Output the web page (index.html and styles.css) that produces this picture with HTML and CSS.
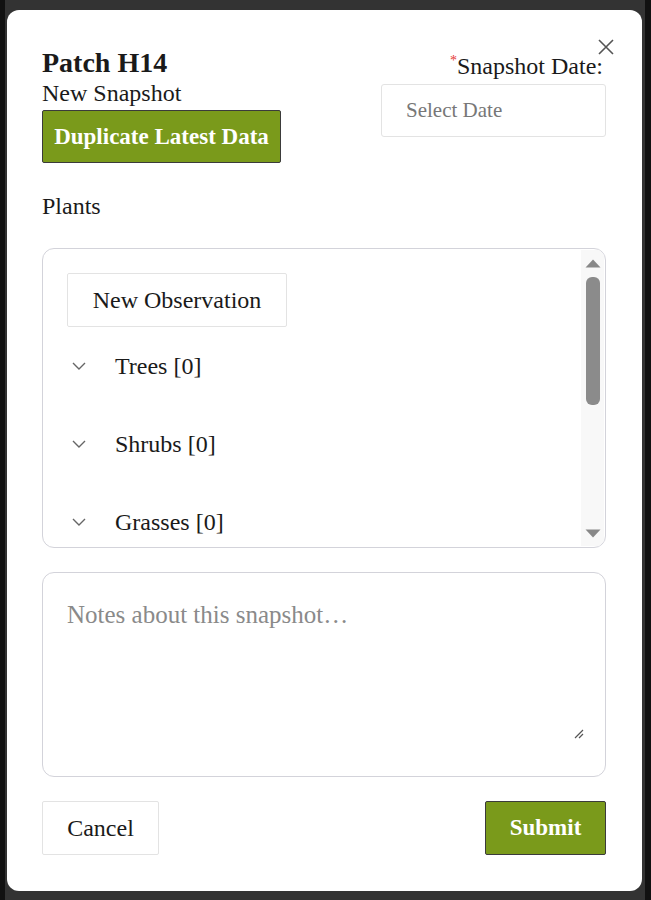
FILE: index.html
```html
<!DOCTYPE html>
<html>
<head>
<meta charset="utf-8">
<link rel="stylesheet" href="styles.css">
</head>
<body>
<div class="backdrop">
  <div class="modal">
    <button class="close" aria-label="Close">
      <svg width="16" height="16" viewBox="0 0 16 16"><path d="M1 1 L15 15 M15 1 L1 15" stroke="#555" stroke-width="1.6" fill="none"/></svg>
    </button>
    <div class="header">
      <div class="head-left">
        <h1 class="title">Patch H14</h1>
        <div class="subtitle">New Snapshot</div>
        <button class="btn btn-primary btn-dup">Duplicate Latest Data</button>
      </div>
      <div class="head-right">
        <label class="date-label"><span class="req">*</span>Snapshot Date:</label>
        <div class="date-input">Select Date</div>
      </div>
    </div>
    <div class="section-title">Plants</div>
    <div class="plants">
      <div class="plants-list">
        <button class="btn btn-default btn-obs">New Observation</button>
        <div class="row"><svg class="chev" width="14" height="8" viewBox="0 0 14 8"><path d="M1 1 L7 7 L13 1" stroke="#666" stroke-width="1.4" fill="none"/></svg><span>Trees [0]</span></div>
        <div class="row"><svg class="chev" width="14" height="8" viewBox="0 0 14 8"><path d="M1 1 L7 7 L13 1" stroke="#666" stroke-width="1.4" fill="none"/></svg><span>Shrubs [0]</span></div>
        <div class="row"><svg class="chev" width="14" height="8" viewBox="0 0 14 8"><path d="M1 1 L7 7 L13 1" stroke="#666" stroke-width="1.4" fill="none"/></svg><span>Grasses [0]</span></div>
      </div>
      <div class="scrollbar">
        <svg class="arrow" width="16" height="9" viewBox="0 0 16 9"><path d="M8 0.5 L15.5 8.5 L0.5 8.5 Z" fill="#888"/></svg>
        <div class="track"><div class="thumb"></div></div>
        <svg class="arrow" width="16" height="9" viewBox="0 0 16 9"><path d="M0.5 0.5 L15.5 0.5 L8 8.5 Z" fill="#888"/></svg>
      </div>
    </div>
    <div class="notes">
      <div class="placeholder">Notes about this snapshot…</div>
      <svg class="resize" width="10" height="10" viewBox="0 0 10 10"><path d="M1 9 L9 1 M5 9 L9 5" stroke="#555" stroke-width="1.2" fill="none"/></svg>
    </div>
    <div class="footer">
      <button class="btn btn-default btn-foot">Cancel</button>
      <button class="btn btn-primary btn-foot">Submit</button>
    </div>
  </div>
</div>
</body>
</html>
```

FILE: styles.css
```css
* { box-sizing: border-box; }
html, body { margin: 0; padding: 0; }
body {
  background: #111111;
  font-family: "Liberation Serif", "DejaVu Serif", serif;
  color: #1a1a1a;
  width: 651px;
  height: 900px;
  overflow: hidden;
}
.backdrop {
  margin: 0 6px 0 5px;
  height: 900px;
  background: #333333;
  padding: 10px 3px 0 2px;
}
.modal {
  position: relative;
  background: #ffffff;
  border-radius: 12px;
  height: 881px;
  padding: 38px 36px 0 35px;
  display: flex;
  flex-direction: column;
}
.close {
  position: absolute;
  top: 29px;
  right: 28px;
  border: 0;
  background: none;
  padding: 0;
  width: 16px;
  height: 16px;
}
.header {
  display: flex;
  justify-content: space-between;
}
.head-left { display: flex; flex-direction: column; align-items: flex-start; }
.title {
  margin: 0;
  font-size: 28px;
  line-height: 30px;
  font-weight: bold;
}
.subtitle {
  font-size: 24px;
  line-height: 26px;
  margin-top: 2px;
}
.btn {
  font-family: "Liberation Serif", "DejaVu Serif", serif;
  border-radius: 2px;
  cursor: pointer;
  padding: 0;
}
.btn-primary {
  background: #7a9a1b;
  border: 1px solid #3b3b3b;
  color: #ffffff;
  font-weight: bold;
}
.btn-default {
  background: #ffffff;
  border: 1px solid #e3e3e3;
  color: #1a1a1a;
}
.btn-dup {
  margin-top: 4px;
  width: 239px;
  height: 53px;
  font-size: 23px;
}
.head-right {
  display: flex;
  flex-direction: column;
  align-items: flex-end;
  padding-top: 0;
}
.date-label {
  font-size: 24px;
  line-height: 26px;
  margin-right: 3px;
}
.req { color: #e53935; font-size: 14px; vertical-align: 9px; }
.date-input {
  margin-top: 5px;
  width: 225px;
  height: 53px;
  border: 1px solid #e3e3e3;
  border-radius: 3px;
  padding-left: 24px;
  display: flex;
  align-items: center;
  color: #777777;
  font-size: 21px;
}
.section-title {
  margin-top: 30px;
  font-size: 24px;
  line-height: 26px;
}
.plants {
  margin-top: 29px;
  height: 300px;
  border: 1px solid #d3d3da;
  border-radius: 12px;
  display: flex;
  overflow: hidden;
}
.plants-list {
  flex: 1;
  overflow: hidden;
  padding: 24px 0 0 24px;
}
.btn-obs {
  width: 220px;
  height: 54px;
  font-size: 24px;
  display: block;
}
.row {
  height: 78px;
  display: flex;
  align-items: center;
  font-size: 24px;
}
.chev { margin-left: 5px; margin-right: 29px; }
.scrollbar {
  width: 23px;
  margin: 1px 1px 1px 0;
  background: #f8f8f8;
  display: flex;
  flex-direction: column;
  align-items: center;
  padding: 9px 0 8px;
}
.arrow { flex: none; }
.track { flex: 1; width: 100%; padding: 9px 4px 0 5px; display: flex; flex-direction: column; }
.thumb {
  height: 128px;
  background: #8b8b8b;
  border-radius: 6px;
}
.notes {
  margin-top: 24px;
  height: 205px;
  border: 1px solid #d3d3da;
  border-radius: 12px;
  padding: 26px 24px 0 24px;
  display: flex;
  flex-direction: column;
}
.placeholder {
  color: #8a8a8a;
  font-size: 25px;
  line-height: 32px;
}
.resize { margin-top: auto; margin-bottom: 37px; align-self: flex-end; margin-right: -3px; }
.footer {
  margin-top: 24px;
  display: flex;
  justify-content: space-between;
}
.btn-foot {
  height: 54px;
  font-size: 24px;
}
.btn-primary.btn-foot { font-size: 23px; }
.btn-default.btn-foot { width: 117px; }
.btn-primary.btn-foot { width: 121px; }
```
